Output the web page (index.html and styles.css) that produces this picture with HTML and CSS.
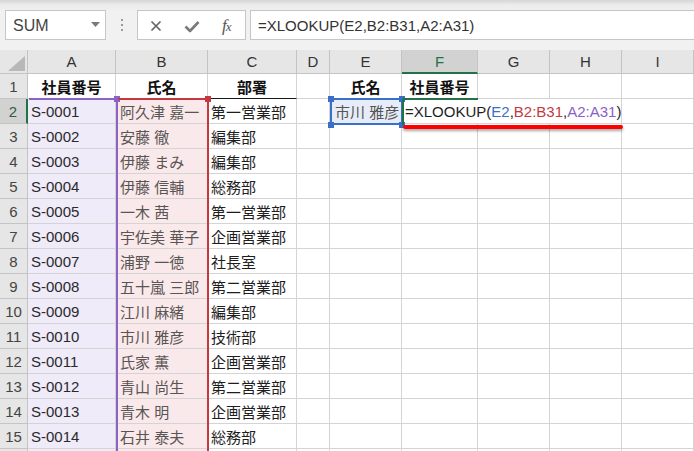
FILE: index.html
```html
<!DOCTYPE html>
<html lang="ja">
<head>
<meta charset="utf-8">
<title>XLOOKUP</title>
<link rel="stylesheet" href="styles.css">
</head>
<body>
<div class="app">
  <div class="toolbar">
    <div class="namebox">
      <span class="nb-text">SUM</span>
      <svg class="caret" width="9" height="5" viewBox="0 0 9 5"><path d="M0 0H9L4.5 5Z" fill="#7a7a7a"/></svg>
    </div>
    <div class="grip"><i></i><i></i><i></i></div>
    <div class="fxbtns">
      <svg class="btn-x" width="12" height="12" viewBox="0 0 12 12"><path d="M1.5 1.5L10.5 10.5M10.5 1.5L1.5 10.5" stroke="#666" stroke-width="1.7" fill="none"/></svg>
      <svg class="btn-ok" width="16" height="12" viewBox="0 0 16 12"><path d="M1.5 5.5L6 10L14.5 1" stroke="#7a7a7a" stroke-width="2.6" fill="none" stroke-linejoin="round"/></svg>
      <span class="btn-fx">f<span class="fx-x">x</span></span>
    </div>
    <div class="formula">=XLOOKUP(E2,B2:B31,A2:A31)</div>
  </div>

  <div class="sheet">
    <div class="grid">
      <div class="c corner"><svg width="17" height="15" viewBox="0 0 17 15"><path d="M17 0V15H0Z" fill="#b8b8b8"/></svg></div>
      <div class="c hd">A</div>
      <div class="c hd">B</div>
      <div class="c hd">C</div>
      <div class="c hd">D</div>
      <div class="c hd">E</div>
      <div class="c hd hd-act">F</div>
      <div class="c hd">G</div>
      <div class="c hd">H</div>
      <div class="c hd">I</div>

      <div class="c rh">1</div>
      <div class="c th">社員番号</div>
      <div class="c th">氏名</div>
      <div class="c th th-c">部署</div>
      <div class="c"></div>
      <div class="c th">氏名</div>
      <div class="c th">社員番号</div>
      <div class="c"></div>
      <div class="c"></div>
      <div class="c"></div>

      <div class="c rh rh-act">2</div>
      <div class="c ca">S-0001</div>
      <div class="c cb">阿久津 嘉一</div>
      <div class="c">第一営業部</div>
      <div class="c"></div>
      <div class="c ce">市川 雅彦</div>
      <div class="c edit"><span>=XLOOKUP(</span><span class="r-blue">E2</span><span>,</span><span class="r-red">B2:B31</span><span>,</span><span class="r-purple">A2:A31</span><span>)</span></div>
      <div class="c"></div>

      <div class="c rh">3</div><div class="c ca">S-0002</div><div class="c cb">安藤 徹</div><div class="c">編集部</div><div class="c"></div><div class="c"></div><div class="c"></div><div class="c"></div><div class="c"></div><div class="c"></div>
      <div class="c rh">4</div><div class="c ca">S-0003</div><div class="c cb">伊藤 まみ</div><div class="c">編集部</div><div class="c"></div><div class="c"></div><div class="c"></div><div class="c"></div><div class="c"></div><div class="c"></div>
      <div class="c rh">5</div><div class="c ca">S-0004</div><div class="c cb">伊藤 信輔</div><div class="c">総務部</div><div class="c"></div><div class="c"></div><div class="c"></div><div class="c"></div><div class="c"></div><div class="c"></div>
      <div class="c rh">6</div><div class="c ca">S-0005</div><div class="c cb">一木 茜</div><div class="c">第一営業部</div><div class="c"></div><div class="c"></div><div class="c"></div><div class="c"></div><div class="c"></div><div class="c"></div>
      <div class="c rh">7</div><div class="c ca">S-0006</div><div class="c cb">宇佐美 華子</div><div class="c">企画営業部</div><div class="c"></div><div class="c"></div><div class="c"></div><div class="c"></div><div class="c"></div><div class="c"></div>
      <div class="c rh">8</div><div class="c ca">S-0007</div><div class="c cb">浦野 一徳</div><div class="c">社長室</div><div class="c"></div><div class="c"></div><div class="c"></div><div class="c"></div><div class="c"></div><div class="c"></div>
      <div class="c rh">9</div><div class="c ca">S-0008</div><div class="c cb">五十嵐 三郎</div><div class="c">第二営業部</div><div class="c"></div><div class="c"></div><div class="c"></div><div class="c"></div><div class="c"></div><div class="c"></div>
      <div class="c rh">10</div><div class="c ca">S-0009</div><div class="c cb">江川 麻緒</div><div class="c">編集部</div><div class="c"></div><div class="c"></div><div class="c"></div><div class="c"></div><div class="c"></div><div class="c"></div>
      <div class="c rh">11</div><div class="c ca">S-0010</div><div class="c cb">市川 雅彦</div><div class="c">技術部</div><div class="c"></div><div class="c"></div><div class="c"></div><div class="c"></div><div class="c"></div><div class="c"></div>
      <div class="c rh">12</div><div class="c ca">S-0011</div><div class="c cb">氏家 薫</div><div class="c">企画営業部</div><div class="c"></div><div class="c"></div><div class="c"></div><div class="c"></div><div class="c"></div><div class="c"></div>
      <div class="c rh">13</div><div class="c ca">S-0012</div><div class="c cb">青山 尚生</div><div class="c">第二営業部</div><div class="c"></div><div class="c"></div><div class="c"></div><div class="c"></div><div class="c"></div><div class="c"></div>
      <div class="c rh">14</div><div class="c ca">S-0013</div><div class="c cb">青木 明</div><div class="c">企画営業部</div><div class="c"></div><div class="c"></div><div class="c"></div><div class="c"></div><div class="c"></div><div class="c"></div>
      <div class="c rh">15</div><div class="c ca">S-0014</div><div class="c cb">石井 泰夫</div><div class="c">総務部</div><div class="c"></div><div class="c"></div><div class="c"></div><div class="c"></div><div class="c"></div><div class="c"></div>
      <div class="c rh"></div><div class="c ca"></div><div class="c cb"></div><div class="c"></div><div class="c"></div><div class="c"></div><div class="c"></div><div class="c"></div><div class="c"></div><div class="c"></div>
    </div>

    <!-- range highlights drawn over the grid -->
    <div class="rng purple-top"></div>
    <div class="rng purple-right"></div>
    <div class="handle purple-h"></div>
    <div class="rng red-top"></div>
    <div class="rng red-right"></div>
    <div class="handle red-h"></div>
    <div class="blue-box"></div>
    <div class="handle blue-h h-tl"></div>
    <div class="handle blue-h h-tr"></div>
    <div class="handle blue-h h-bl"></div>
    <div class="handle blue-h h-br"></div>
    <div class="rng green-top"></div>
    <div class="rng green-left"></div>
    <div class="underline"></div>
  </div>
</div>
</body>
</html>
```

FILE: styles.css
```css
* { box-sizing: border-box; }

html, body {
  margin: 0;
  padding: 0;
  background: #ffffff;
}

body {
  font-family: "Liberation Sans", "Noto Sans CJK JP", sans-serif;
  font-size: 15px;
  color: #222;
}

.app {
  width: 694px;
  height: 451px;
  overflow: hidden;
}

/* ---------- toolbar ---------- */
.toolbar {
  height: 50px;
  display: flex;
  align-items: flex-start;
  padding: 10px 0 0 5px;
  background: linear-gradient(#d6d6d6 0, #ececec 5px, #f1f1f1 12px, #f1f1f1 100%);
}

.namebox {
  width: 101px;
  height: 30px;
  background: #fff;
  border: 1px solid #c6c6c6;
  display: flex;
  align-items: center;
  justify-content: space-between;
  padding: 0 5px 0 7px;
}

.nb-text {
  color: #444;
  font-size: 16px;
  padding-top: 1px;
}

.caret { margin-top: -2px; }

.grip {
  width: 31px;
  height: 30px;
  display: flex;
  flex-direction: column;
  align-items: center;
  justify-content: center;
  gap: 3px;
}

.grip i {
  display: block;
  width: 2px;
  height: 2px;
  background: #9a9a9a;
}

.fxbtns {
  width: 109px;
  height: 30px;
  background: #fff;
  border: 1px solid #c6c6c6;
  display: flex;
  align-items: center;
  padding: 1px 0 0 12px;
}

.btn-x { margin-right: 22px; }
.btn-ok { margin-top: 2px; margin-right: 22px; }

.btn-fx {
  font-family: "Liberation Serif", serif;
  font-style: italic;
  font-size: 17px;
  color: #555;
  letter-spacing: -1px;
}

.fx-x { font-size: 13px; }

.formula {
  flex: 1;
  margin-left: 4px;
  height: 30px;
  background: #fff;
  border: 1px solid #c6c6c6;
  border-right: 0;
  display: flex;
  align-items: center;
  padding-left: 7px;
  color: #333;
  font-size: 15px;
}

/* ---------- sheet ---------- */
.sheet {
  position: relative;
}

.grid {
  display: grid;
  grid-template-columns: 28px 88px 92px 89px 33px 72px 76px 72px 72px 72px;
  grid-template-rows: 24px repeat(16, 25px);
}

.c {
  border-right: 1px solid #d4d4d4;
  border-bottom: 1px solid #d4d4d4;
  display: flex;
  align-items: center;
  padding-left: 3px;
  white-space: nowrap;
  overflow: hidden;
  font-size: 15px;
  color: #1e1e1e;
}

.corner {
  background: #e6e6e6;
  border-right-color: #c4c4c4;
  border-bottom-color: #c4c4c4;
  align-items: flex-end;
  justify-content: flex-end;
  padding: 0 2px 2px 0;
}

.hd {
  background: #e6e6e6;
  border-right-color: #c4c4c4;
  border-bottom-color: #c4c4c4;
  justify-content: center;
  padding-left: 0;
  color: #333;
}

.hd-act {
  background: #d2d2d2;
  color: #217346;
  border-bottom: 2px solid #217346;
}

.rh {
  background: #e6e6e6;
  border-right-color: #c4c4c4;
  border-bottom-color: #c4c4c4;
  justify-content: center;
  padding-left: 0;
  color: #444;
}

.rh-act {
  background: #d2d2d2;
  color: #2e5e43;
  border-right: 2px solid #217346;
}

.th {
  font-weight: 700;
  justify-content: center;
  padding-left: 0;
  color: #111;
}

.th-c {
  border-bottom: 1px solid #1a1a1a;
}

.ca {
  background: #efebf9;
  color: #2a2a2a;
}

.cb {
  background: #f9e9ea;
  color: #5a5555;
  padding-left: 4px;
}

.ce {
  background: #e7edf8;
  color: #555;
  padding-left: 5px;
}

.edit {
  grid-column: span 3;
  background: #fff;
  color: #1e1e1e;
  overflow: visible;
  padding-left: 3px;
}

.r-blue { color: #3a70c9; }
.r-red { color: #c4393f; }
.r-purple { color: #8d5ec6; }

/* ---------- overlays ---------- */
.rng { position: absolute; }

.purple-top { left: 29px; top: 48px; width: 88px; height: 2px; background: #8b62c6; }
.purple-right { left: 116px; top: 48px; width: 2px; height: 360px; background: #8b62c6; }
.red-top { left: 118px; top: 48px; width: 90px; height: 2px; background: #c4393f; }
.red-right { left: 207px; top: 48px; width: 2px; height: 360px; background: #c4393f; }

.handle {
  position: absolute;
  width: 6px;
  height: 6px;
}
.purple-h { left: 114px; top: 46px; background: #8b62c6; }
.red-h { left: 205px; top: 46px; background: #c4393f; }

.blue-box {
  position: absolute;
  left: 330px;
  top: 48px;
  width: 73px;
  height: 27px;
  border: 2px solid #3a6fc8;
}
.blue-h { background: #3a6fc8; }
.h-tl { left: 328px; top: 46px; }
.h-tr { left: 399px; top: 46px; }
.h-bl { left: 328px; top: 72px; }
.h-br { left: 399px; top: 72px; }

.green-top { left: 403px; top: 48px; width: 75px; height: 2px; background: #217346; }
.green-left { left: 402px; top: 49px; width: 2px; height: 26px; background: #217346; }

.underline {
  position: absolute;
  left: 403px;
  top: 75px;
  width: 220px;
  height: 4px;
  border-radius: 2px;
  background: #ff0000;
  box-shadow: 0 2px 3px rgba(0, 0, 0, 0.35);
}
```
